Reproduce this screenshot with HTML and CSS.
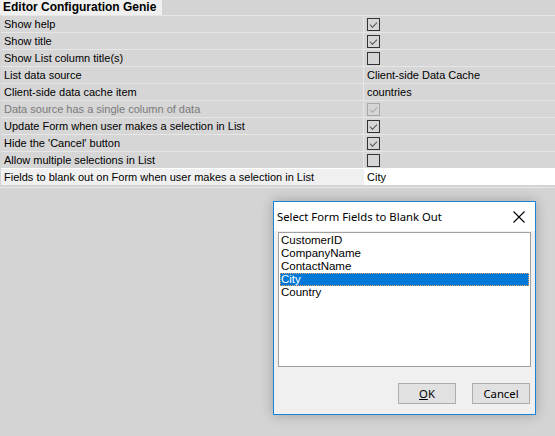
FILE: index.html
```html
<!DOCTYPE html>
<html>
<head>
<meta charset="utf-8">
<link rel="stylesheet" href="styles.css">
</head>
<body>
<div class="grid">
  <div class="header"><span class="title">Editor Configuration Genie</span></div>
  <div class="row"><div class="label">Show help</div><div class="value"><span class="cb checked"></span></div></div>
  <div class="row"><div class="label">Show title</div><div class="value"><span class="cb checked"></span></div></div>
  <div class="row"><div class="label">Show List column title(s)</div><div class="value"><span class="cb"></span></div></div>
  <div class="row"><div class="label">List data source</div><div class="value">Client-side Data Cache</div></div>
  <div class="row"><div class="label">Client-side data cache item</div><div class="value">countries</div></div>
  <div class="row disabled"><div class="label">Data source has a single column of data</div><div class="value"><span class="cb checked"></span></div></div>
  <div class="row"><div class="label">Update Form when user makes a selection in List</div><div class="value"><span class="cb checked"></span></div></div>
  <div class="row"><div class="label">Hide the 'Cancel' button</div><div class="value"><span class="cb checked"></span></div></div>
  <div class="row"><div class="label">Allow multiple selections in List</div><div class="value"><span class="cb"></span></div></div>
  <div class="row active"><div class="label">Fields to blank out on Form when user makes a selection in List</div><div class="value">City</div></div>
  <div class="bottomline"></div>
</div>

<div class="dialog">
  <div class="titlebar">
    <span class="dtitle">Select Form Fields to Blank Out</span>
    <svg class="close" width="12" height="12" viewBox="0 0 12 12"><path d="M0.5 0.5 L11.5 11.5 M11.5 0.5 L0.5 11.5" stroke="#000" stroke-width="1.1" fill="none"/></svg>
  </div>
  <div class="dbody">
    <div class="listbox">
      <div class="item">CustomerID</div>
      <div class="item">CompanyName</div>
      <div class="item">ContactName</div>
      <div class="item selected">City</div>
      <div class="item">Country</div>
    </div>
    <div class="buttons">
      <button class="btn"><u>O</u>K</button>
      <button class="btn">Cancel</button>
    </div>
  </div>
</div>
</body>
</html>
```
FILE: styles.css
```css
html, body {
  margin: 0;
  padding: 0;
  background: #d4d4d4;
  width: 555px;
  height: 436px;
  overflow: hidden;
}
.grid {
  font-family: "Liberation Sans", Arial, sans-serif;
  font-size: 11px;
  color: #000;
}
.header {
  height: 15px;
  background: #d4d4d4;
  display: flex;
}
.title {
  background: #f0f0f0;
  font-weight: bold;
  font-size: 12px;
  padding: 0 0 0 3px;
  width: 159px;
  line-height: 15px;
}
.row {
  display: flex;
  height: 16px;
  border-top: 1px solid #e6e6e6;
  margin-left: 1px;
}
.label {
  width: 359px;
  padding-left: 3px;
  line-height: 16px;
  background: #d6d6d6;
  border-right: 1px solid #e6e6e6;
  white-space: nowrap;
  overflow: hidden;
}
.value {
  flex: 1;
  padding-left: 3px;
  line-height: 16px;
  background: #d6d6d6;
  display: flex;
  align-items: center;
}
.disabled .label { color: #7a7a7a; }
.active { border-top-color: #ffffff; }
.active .label { background: #f0f0f0; border-right-color: #f0f0f0; }
.active .value { background: #ffffff; }
.bottomline {
  height: 1px;
  margin-top: 2px;
  background: #e6e6e6;
}
.cb {
  width: 11px;
  height: 11px;
  border: 1px solid #333;
  box-sizing: content-box;
  position: relative;
}
.cb.checked::after {
  content: "";
  position: absolute;
  left: 2px;
  top: 1px;
  width: 6px;
  height: 3px;
  border-left: 1px solid #555;
  border-bottom: 1px solid #555;
  transform: translate(0, 2px) rotate(-45deg);
  transform-origin: center;
}
.disabled .cb { border-color: #a8a8a8; }
.disabled .cb.checked::after { border-color: #a8a8a8; }

.dialog {
  position: absolute;
  left: 273px;
  top: 201px;
  width: 261px;
  height: 212px;
  border: 1px solid #1883d7;
  background: #f0f0f0;
  box-shadow: 0 0 12px rgba(0,0,0,0.25);
  font-family: "Noto Sans", "Open Sans", sans-serif;
  font-size: 11px;
  display: flex;
  flex-direction: column;
}
.titlebar {
  height: 29px;
  background: #ffffff;
  display: flex;
  align-items: center;
  justify-content: space-between;
  padding: 0 10px 0 3px;
}
.dtitle { color: #000; font-size: 11.3px; }
.dbody {
  flex: 1;
  display: flex;
  flex-direction: column;
  padding: 1px 4px 0 4px;
}
.listbox {
  height: 130px;
  background: #fff;
  border: 1px solid #a0a0a0;
  padding: 1px 1px 2px;
  font-family: "Liberation Sans", Arial, sans-serif;
  font-size: 11.5px;
}
.item {
  height: 13px;
  line-height: 13px;
  padding-left: 1px;
  white-space: nowrap;
}
.item.selected {
  background: #0078d7;
  color: #fff;
  outline: 1px dotted #e8a060;
  outline-offset: -1px;
}
.buttons {
  display: flex;
  justify-content: flex-end;
  gap: 16px;
  margin-top: 16px;
  padding-right: 1px;
}
.btn {
  width: 58px;
  height: 21px;
  background: #e1e1e1;
  border: 1px solid #adadad;
  font-family: "Noto Sans", "Open Sans", sans-serif;
  font-size: 11.3px;
  color: #000;
  padding: 0;
  line-height: 18px;
}
```
